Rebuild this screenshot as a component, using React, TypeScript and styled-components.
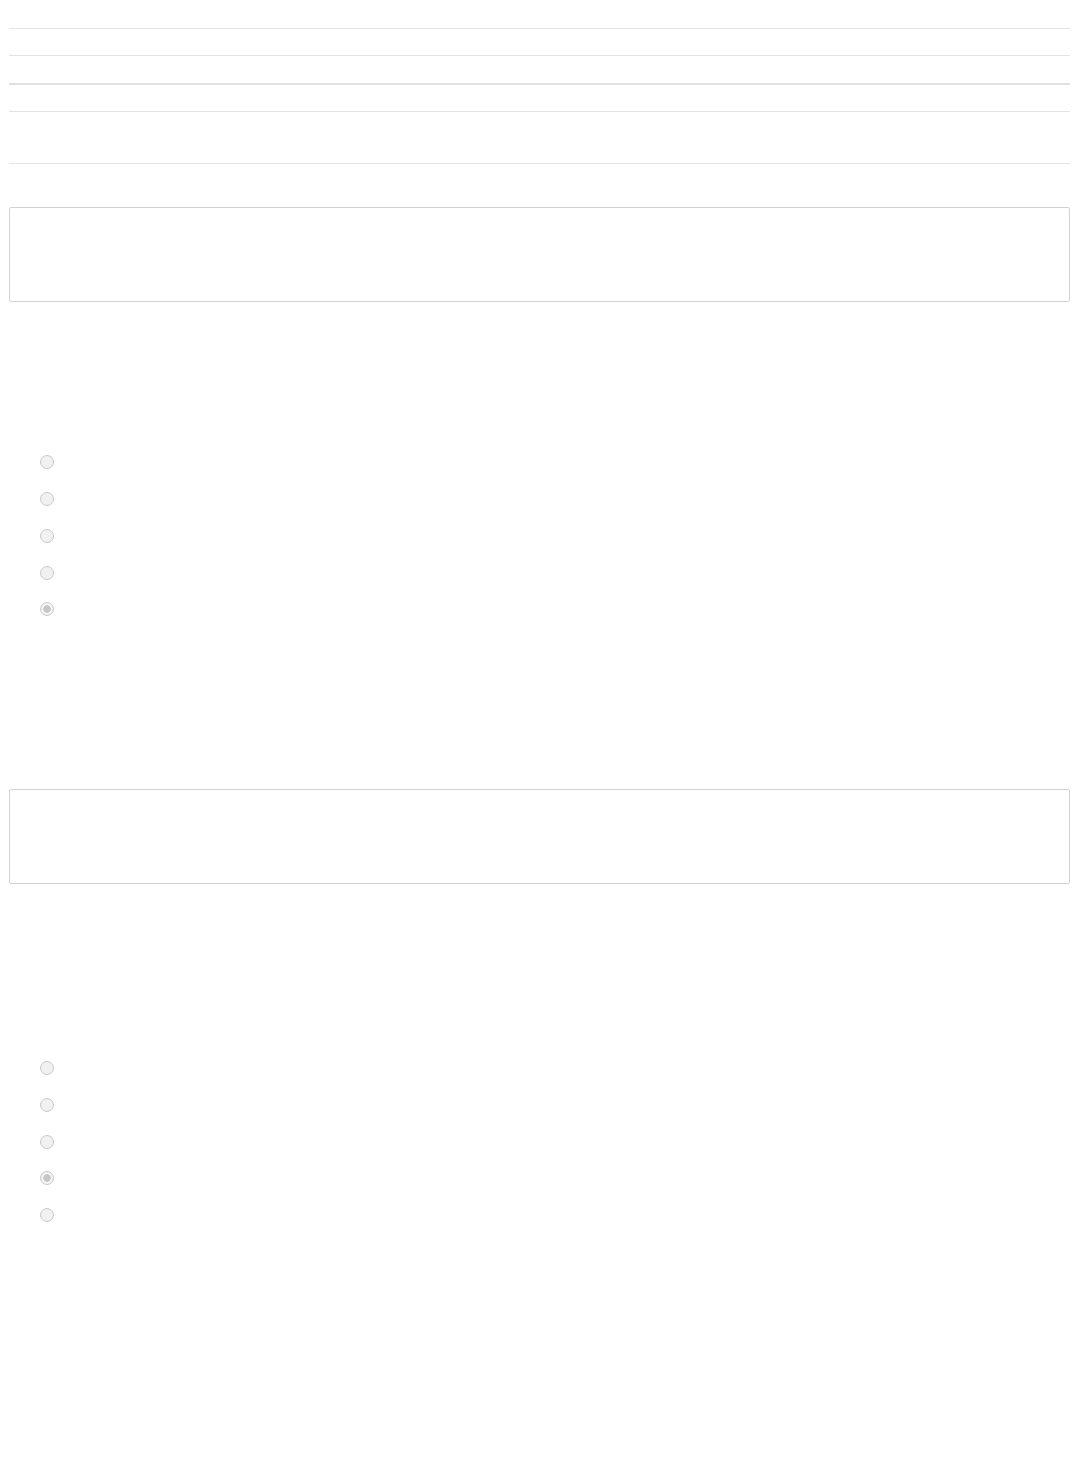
import React from "react";
import styled, { createGlobalStyle } from "styled-components";

const GlobalStyle = createGlobalStyle`
  body {
    margin: 8px;
    background: #fff;
    font-family: "Open Sans", "Liberation Sans", sans-serif;
    color: #fff;
  }
`;

const Page = styled.div`
  display: flex;
  flex-direction: column;
  padding-left: 1px;
`;

const Row = styled.div<{ $h: number; $thick?: boolean }>`
  height: ${(p) => p.$h}px;
  border-bottom: ${(p) => (p.$thick ? "2px solid #dde0e4" : "1px solid #e3e3e3")};
`;

const Gap = styled.div<{ $h: number }>`
  height: ${(p) => p.$h}px;
`;

const Answer = styled.textarea`
  display: block;
  box-sizing: border-box;
  width: 100%;
  height: 95px;
  margin: 0;
  padding: 6px 8px;
  border: 1px solid #cfd3d8;
  border-radius: 2px;
  background: #fff;
  resize: none;
  outline: none;
  font: inherit;
`;

const Options = styled.div`
  display: flex;
  flex-direction: column;
  padding-left: 31px;
`;

const Option = styled.label`
  display: flex;
  align-items: center;
  gap: 10px;
  height: 36.75px;
  font-size: 14px;
  color: #fff;
`;

const Radio = styled.input`
  appearance: none;
  box-sizing: border-box;
  width: 14px;
  height: 14px;
  margin: 0;
  border: 1.5px solid #c9c9c9;
  border-radius: 50%;
  background: #f1f1f1;

  &:checked {
    background: radial-gradient(circle, #c6c6c6 0 3.5px, #f7f7f7 4px 4.8px, #f1f1f1 5.2px);
  }
`;

const RadioGroup: React.FC<{ name: string; checked: number }> = ({ name, checked }) => (
  <Options>
    {[0, 1, 2, 3, 4].map((i) => (
      <Option key={i}>
        <Radio type="radio" name={name} disabled checked={i === checked} readOnly />
      </Option>
    ))}
  </Options>
);

export default function App() {
  return (
    <>
      <GlobalStyle />
      <Page>
        <Row $h={20} />
        <Row $h={26} />
        <Row $h={27} $thick />
        <Row $h={26} />
        <Row $h={51} />
        <Gap $h={43} />
        <Answer readOnly />
        <Gap $h={142} />
        <RadioGroup name="q1" checked={4} />
        <Gap $h={161} />
        <Answer readOnly />
        <Gap $h={166} />
        <RadioGroup name="q2" checked={3} />
        <Gap $h={230} />
      </Page>
    </>
  );
}
